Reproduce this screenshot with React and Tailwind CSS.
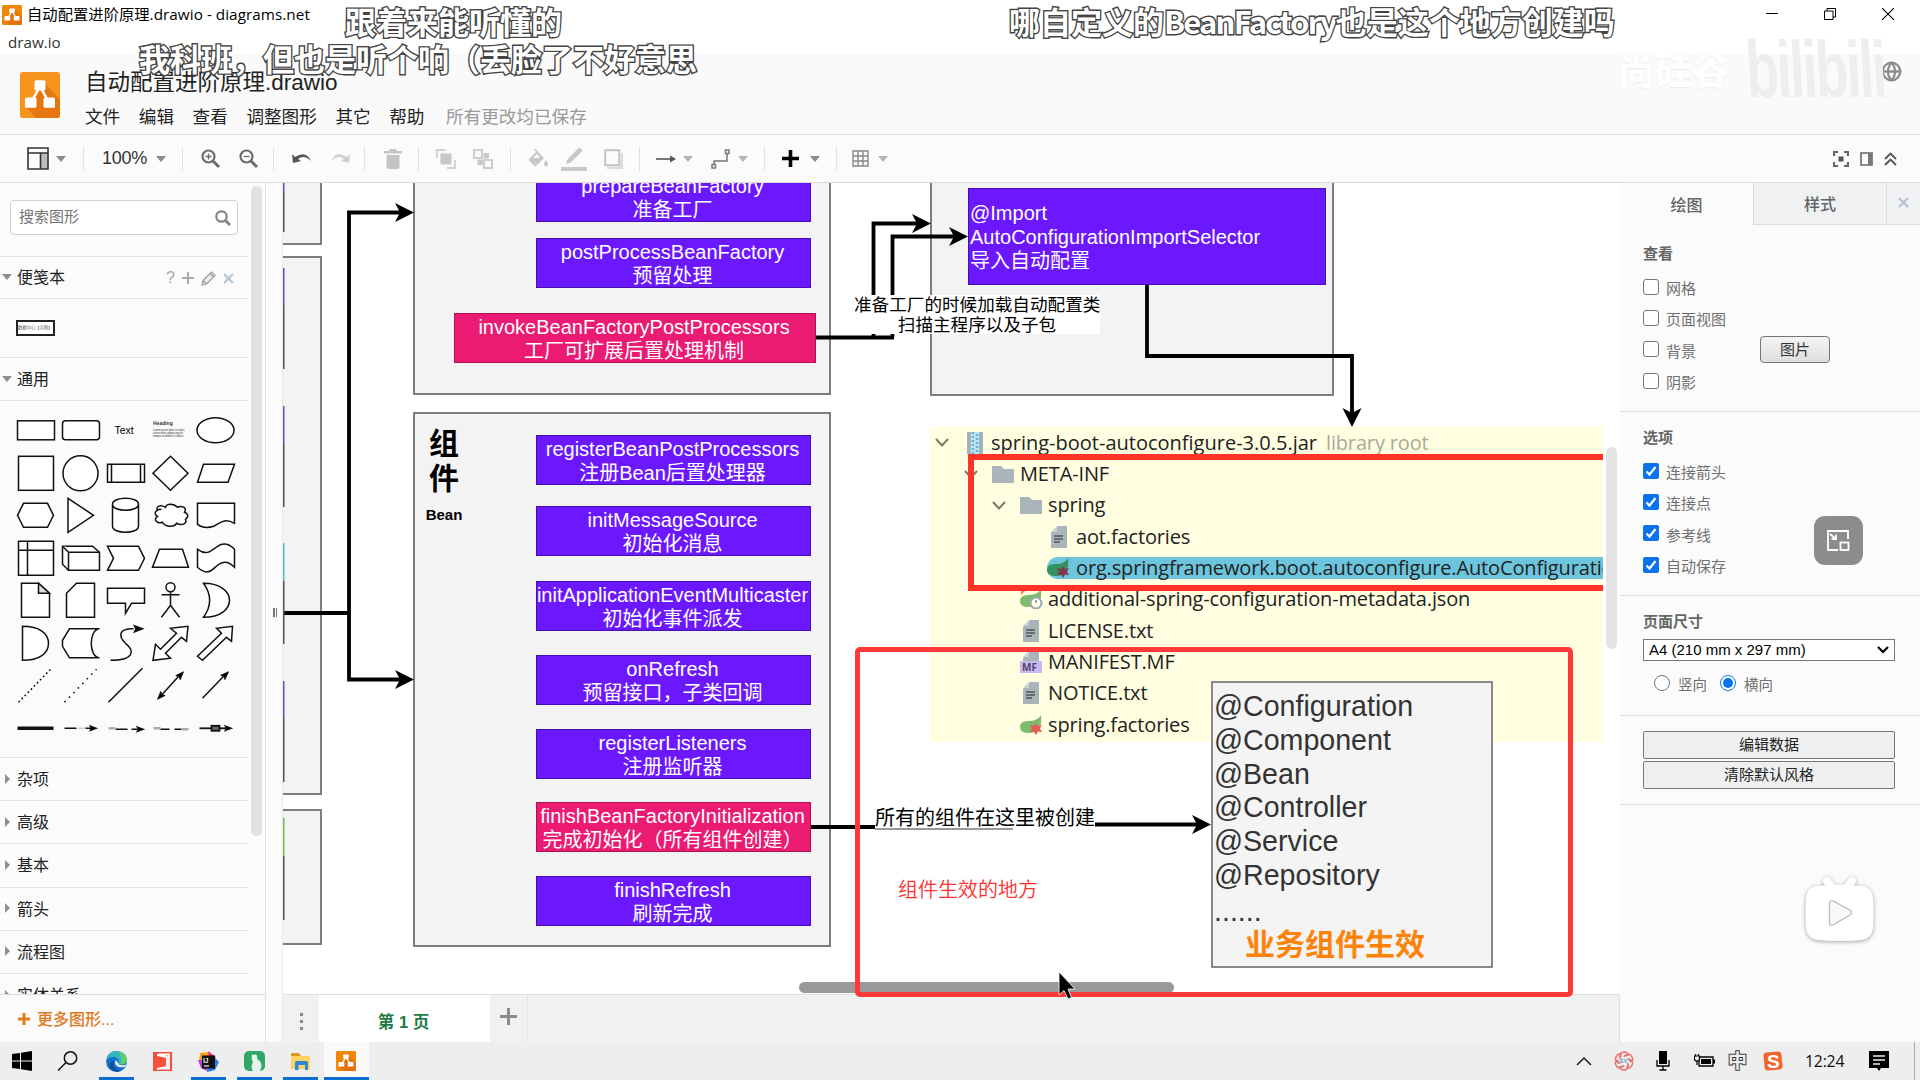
import React from 'react';
import { Globe } from 'lucide-react';

const DrawioLogo = ({ className, bg = '#f08705' }) => (
  <svg className={className} viewBox="0 0 40 45" preserveAspectRatio="none">
    <rect width="40" height="45" rx="3" fill={bg} />
    <path d="M23 9 L40 27 V42 Q40 45 37 45 H16 L6 34 L17 22 Z" fill="#df6c0c" opacity="0.75" />
    <path d="M20 14 L11 30 M20 14 L29 30" stroke="#fff" strokeWidth="2.6" />
    <rect x="14.5" y="8" width="11" height="10" rx="1.5" fill="#fff" />
    <rect x="5" y="25" width="11.5" height="10" rx="1.5" fill="#fff" />
    <rect x="23.5" y="25" width="11.5" height="10" rx="1.5" fill="#fff" />
  </svg>
);

const Caret = ({ className = 'text-[#8a8a8a]' }) => (
  <svg className={`w-[10px] h-[6px] shrink-0 ${className}`} viewBox="0 0 10 6">
    <path d="M0 0 H10 L5 6 Z" fill="currentColor" />
  </svg>
);

/* ---------- Window title ---------- */

const TitleBar = () => (
  <div className="h-[54px] bg-white flex justify-between text-black font-['Open_Sans','Noto_Sans_CJK_SC',sans-serif]">
    <div>
      <div className="flex items-center h-[28px] pl-[2px] gap-[5px] pt-px">
        <DrawioLogo className="w-[20px] h-[20px]" />
        <span className="text-[15.3px] tracking-[0.03px] whitespace-nowrap">自动配置进阶原理.drawio - diagrams.net</span>
      </div>
      <div className="pl-[8px] text-[15.2px] leading-[28px] text-[#333]">draw.io</div>
    </div>
    <div className="flex pt-[8px] pr-[26px] gap-[46px]">
      <svg className="w-[12px] h-[12px]" viewBox="0 0 12 12"><path d="M0 5.5 H12" stroke="#000" /></svg>
      <svg className="w-[12px] h-[12px]" viewBox="0 0 12 12" fill="none" stroke="#000">
        <path d="M0.5 3 H9 V11.5 H0.5 Z M3 3 V0.5 H11.5 V9 H9" />
      </svg>
      <svg className="w-[12px] h-[12px]" viewBox="0 0 12 12"><path d="M0 0 L12 12 M12 0 L0 12" stroke="#000" strokeWidth="1.1" /></svg>
    </div>
  </div>
);

const menus = ['文件', '编辑', '查看', '调整图形', '其它', '帮助'];

const Header = () => (
  <div className="h-[81px] bg-[#fafafa] border-b border-[#dcdcdc] flex">
    <DrawioLogo className="w-[40px] h-[46px] ml-[20px] mt-[18px]" bg="#f6941d" />
    <div className="ml-[25px] flex-1">
      <div className="text-[22.5px] leading-[30px] mt-[14px] text-[#222]">自动配置进阶原理.drawio</div>
      <div className="flex gap-[18.6px] text-[17.6px] leading-[26px] mt-[6px] text-[#222]">
        {menus.map((menu) => (
          <span key={menu}>{menu}</span>
        ))}
        <span className="text-[#999] ml-[3px]">所有更改均已保存</span>
      </div>
    </div>
    <Globe className="w-[21px] h-[21px] mt-[7px] mr-[18px] text-[#8c8c8c]" strokeWidth={2.6} />
  </div>
);

/* ---------- Toolbar ---------- */

const Group = ({ className, children }) => (
  <div className={`flex items-center h-[24px] border-r border-[#e2e2e2] ${className}`}>{children}</div>
);

const Magnifier = ({ plus }) => (
  <svg className="w-[19px] h-[19px] shrink-0" viewBox="0 0 19 19" fill="none" stroke="#6b6b6b">
    <circle cx="7.5" cy="7.5" r="6" strokeWidth="2.2" />
    <path d="M12 12 L18 18" strokeWidth="2.8" />
    <path d={plus ? 'M4.5 7.5 H10.5 M7.5 4.5 V10.5' : 'M4.5 7.5 H10.5'} strokeWidth="1.3" />
  </svg>
);

const Toolbar = () => (
  <div className="h-[48px] bg-[#fbfbfb] border-b border-[#dcdcdc] flex items-center">
    <Group className="w-[84px] pl-[27px] gap-[7px]">
      <svg className="w-[22px] h-[23px]" viewBox="0 0 22 23" fill="none" stroke="#333" strokeWidth="1.6">
        <rect x="14" y="6" width="7" height="16" fill="#bbb" stroke="none" />
        <path d="M1 1 H21 V22 H1 Z M1 6 H21 M13.5 6 V22" />
      </svg>
      <Caret />
    </Group>
    <Group className="w-[98.5px] pl-[18px] gap-[9px] text-[18px] text-[#333]">
      <span className="w-[45px] tracking-[-0.3px]">100%</span>
      <Caret />
    </Group>
    <Group className="w-[91px] pl-[18px] gap-[19px]">
      <Magnifier plus />
      <Magnifier />
    </Group>
    <Group className="w-[91px] pl-[18px] gap-[18px]">
      <svg className="w-[20px] h-[12px]" viewBox="0 0 20 12">
        <path d="M0 1 L1 10 L9 8 L6 6 Q12 1 19 8 Q14 -3 3 4 Z" fill="#555" />
      </svg>
      <svg className="w-[20px] h-[12px]" viewBox="0 0 20 12">
        <path d="M20 1 L19 10 L11 8 L14 6 Q8 1 1 8 Q6 -3 17 4 Z" fill="#d0d0d0" />
      </svg>
    </Group>
    <Group className="w-[54px] pl-[19px]">
      <svg className="w-[18px] h-[20px]" viewBox="0 0 18 20" fill="#c4c4c4">
        <path d="M0 2 H5 L6 0 H12 L13 2 H18 V4.5 H0 Z M2.5 6 H15.5 V18 Q15.5 20 13.5 20 H4.5 Q2.5 20 2.5 18 Z" />
      </svg>
    </Group>
    <Group className="w-[92px] pl-[17px] gap-[17px]">
      <svg className="w-[20px] h-[20px]" viewBox="0 0 20 20" fill="none" stroke="#cfcfcf" strokeWidth="1.8">
        <path d="M9 1 H1 V9 M19 11 V19 H11" />
        <rect x="4.5" y="4.5" width="11" height="11" fill="#c8c8c8" stroke="none" />
      </svg>
      <svg className="w-[20px] h-[20px]" viewBox="0 0 20 20" fill="none" stroke="#c8c8c8" strokeWidth="1.8">
        <rect x="1" y="1" width="8" height="8" />
        <rect x="11" y="11" width="8" height="8" />
        <path d="M10.5 4 H16 V9.5 H10 V16 H4.5 V10.5 H10.5 Z" fill="#c8c8c8" stroke="none" />
      </svg>
    </Group>
    <Group className="w-[129px] pl-[16px] gap-[13px]">
      <svg className="w-[21px] h-[20px]" viewBox="0 0 21 20" fill="#c8c8c8">
        <path d="M3 9 L9 3 L7 1 L8.5 0 L17 9 L9 17 Q8 17.5 7 16.5 L2 11.5 Q1 10 3 9 Z M19 11 Q21 14 21 15.5 A2 2 0 0 1 17 15.5 Q17 14 19 11 Z" />
        <path d="M6 9 L10 5 L13 8.5 Z" fill="#fbfbfb" />
      </svg>
      <svg className="w-[26px] h-[24px]" viewBox="0 0 26 24" fill="#c8c8c8">
        <path d="M5 17 L6 13 L17 1.5 Q18.5 0 20 1.5 L21 2.5 Q22 4 20.5 5 L9 16 Z" />
        <rect y="20" width="26" height="4" />
      </svg>
      <svg className="w-[19px] h-[20px] ml-[4px]" viewBox="0 0 19 20" fill="none">
        <path d="M3 19 H18 V4" stroke="#dcdcdc" strokeWidth="3" />
        <rect x="1.2" y="1.2" width="14" height="15" stroke="#c4c4c4" strokeWidth="2" fill="#fbfbfb" />
      </svg>
    </Group>
    <Group className="w-[125px] pl-[16px] gap-[7px]">
      <svg className="w-[20px] h-[8px]" viewBox="0 0 20 8">
        <path d="M0 4 H16" stroke="#555" strokeWidth="1.6" />
        <path d="M14 0.5 L20 4 L14 7.5 Z" fill="#555" />
      </svg>
      <Caret className="text-[#b5b5b5]" />
      <svg className="w-[20px] h-[20px] ml-[11px]" viewBox="0 0 20 20" fill="none" stroke="#777" strokeWidth="1.5">
        <path d="M3 16 V12 H16 V4" />
        <rect x="1" y="15.5" width="3.5" height="3.5" />
        <rect x="14.5" y="1" width="3.5" height="3.5" />
      </svg>
      <Caret className="text-[#b5b5b5]" />
    </Group>
    <Group className="w-[72px] pl-[17px] gap-[11px]">
      <svg className="w-[17px] h-[17px]" viewBox="0 0 17 17"><path d="M8.5 0 V17 M0 8.5 H17" stroke="#000" strokeWidth="3.6" /></svg>
      <Caret />
    </Group>
    <div className="flex items-center gap-[9px] pl-[15px]">
      <svg className="w-[17px] h-[17px]" viewBox="0 0 17 17" fill="none" stroke="#888" strokeWidth="1.4">
        <path d="M1 1 H16 V16 H1 Z M1 6 H16 M1 11 H16 M6 1 V16 M11 1 V16" />
      </svg>
      <Caret className="text-[#b5b5b5]" />
    </div>
    <div className="ml-auto mr-[23px] flex items-center gap-[11px]">
      <svg className="w-[16px] h-[16px]" viewBox="0 0 16 16" fill="none" stroke="#666" strokeWidth="2.2">
        <path d="M1 5 V1 H5 M11 1 H15 V5 M15 11 V15 H11 M5 15 H1 V11" />
        <rect x="5.5" y="5.5" width="5" height="5" fill="#555" stroke="none" />
      </svg>
      <svg className="w-[13px] h-[14px]" viewBox="0 0 13 14">
        <path d="M1 1 H12 V13 H1 Z" fill="none" stroke="#666" strokeWidth="1.6" />
        <rect x="8" y="1" width="4" height="12" fill="#777" />
      </svg>
      <svg className="w-[13px] h-[14px]" viewBox="0 0 13 14" fill="none" stroke="#555" strokeWidth="1.9">
        <path d="M1 7 L6.5 1.5 L12 7 M1 13 L6.5 7.5 L12 13" />
      </svg>
    </div>
  </div>
);

/* ---------- Shape sidebar ---------- */

const HEAD = 'M0 0 L-8 -3 L-6.5 0 L-8 3 Z';

const shapes = [
  <rect x="-18" y="-9.5" width="37" height="19" />,
  <rect x="-18" y="-9.5" width="37" height="19" rx="3" />,
  <text x="-11" y="4" fontSize="10.5" fill="#000" stroke="none">Text</text>,
  <g stroke="none" fill="#333">
    <text x="-17.5" y="-5" fontSize="5" fontWeight="bold">Heading</text>
    <text x="-17.5" y="1" fontSize="2.6">Lorem ipsum dolor sit amet,</text>
    <text x="-17.5" y="4" fontSize="2.6">consectetur adipisicing elit</text>
    <text x="-17.5" y="7" fontSize="2.6">tempor incididunt ut labore</text>
  </g>,
  <ellipse rx="18.5" ry="12.5" />,
  <rect x="-17" y="-17" width="35" height="34" />,
  <circle r="17.5" />,
  <path d="M-18 -9 H19 V9 H-18 Z M-14 -9 V9 M15 -9 V9" />,
  <path d="M0 -17 L17.5 0 L0 17 L-17.5 0 Z" />,
  <path d="M-12 -9 H19 L12.5 9 H-18 Z" />,
  <path d="M-12 -12 H12 L18 0 L12 12 H-12 L-18 0 Z" />,
  <path d="M-12.5 -17 L13 0 L-12.5 17 Z" />,
  <path d="M-13 -11 V11 C-13 19 13 19 13 11 V-11 C13 -19 -13 -19 -13 -11 C-13 -3 13 -3 13 -11" />,
  <path d="M-9 -6 C-14 -6 -18 -2 -13 1 C-18 4 -13 9 -8 7 C-5 12 4 12 6 8 C12 11 17 8 15 4 C19 1 17 -2 14 -3 C17 -8 11 -10 7 -8 C3 -12 -4 -12 -5 -8 C-10 -11 -15 -9 -13 -5" />,
  <path d="M-18 -12 H19 V8 C9 2 4 8 -2 11 C-8 13 -14 12 -18 9 Z" />,
  <path d="M-17 -17 H18 V17 H-17 Z M-8 -17 V17 M-17 -8 H18" />,
  <g><path d="M-18 -12 H12 L19 -6 V12 H-12 L-18 6 Z" /><path d="M-18 -12 L-12 -6 H19 M-12 -6 V12" /></g>,
  <path d="M-18 -12 H13 L19 0 L13 12 H-18 L-12 0 Z" />,
  <path d="M-11 -9 H12 L18 9 H-18 Z" />,
  <path d="M-18 -9 C-8 -2 -4 -8 2 -12 C8 -16 14 -14 19 -9 V9 C14 4 8 2 2 7 C-4 12 -8 18 -18 9 Z" />,
  <g><path d="M-14 -17 H3 L14 -7 V17 H-14 Z" /><path d="M3 -17 V-7 H14 Z" fill="#ddd" /></g>,
  <path d="M-4 -17 H14 V17 H-14 V-7 Z" />,
  <path d="M-18 -12 H19 V3 H6 L0 13 V3 H-18 Z" />,
  <g><circle cy="-13" r="4.5" /><path d="M0 -8 V5 M-9 -5.5 H9 M-9 17 L0 5 L9 17" fill="none" /></g>,
  <path d="M-12 -17 C6 -17 14 -8 14 0 C14 8 6 17 -12 17 C-4 6 -4 -6 -12 -17 Z" />,
  <path d="M-13 -17 C4 -17 13 -10 13 0 C13 10 4 17 -13 17 Z" />,
  <path d="M-11 -14.5 H19 C8 -14 8 14 19 14.5 H-11 L-18 3 V-3 Z" />,
  <g><path d="M-15 17 C8 17 10 8 0 0 C-8 -8 -6 -15 8 -14.5" fill="none" /><path d={HEAD} transform="translate(17 -14.5)" fill="#000" /></g>,
  <path d="M17.5 -17 L16 -2 L11 -6 L-5 10 L0 15 L-17.5 17 L-15 1 L-10 6 L6 -10 L0 -15 Z" />,
  <path d="M17 -17 L16 -2 L11 -6 L-13 17 L-18 13 L6 -10 L1 -15 Z" />,
  <path d="M-17 16 L16 -18" strokeDasharray="1.8 2.6" />,
  <path d="M-16 16 L16 -17" strokeDasharray="1.6 4.8" />,
  <path d="M-17 16 L17 -18" />,
  <g transform="translate(0 -1)"><path d="M-10 11 L10 -11" /><path d={HEAD} transform="translate(13 -13.5) rotate(-47)" fill="#000" strokeWidth="0.8" /><path d={HEAD} transform="translate(-13 14) rotate(133)" fill="#000" strokeWidth="0.8" /></g>,
  <g transform="translate(0 -1)"><path d="M-13 13 L10 -11" /><path d={HEAD} transform="translate(13 -13.5) rotate(-45)" fill="#000" strokeWidth="0.8" /></g>,
  <path d="M-18 0 H18" strokeWidth="3.4" />,
  <g><path d="M-16 0 H-4 M5 0 H12" strokeWidth="1.6" /><path d="M-2 0 H4" stroke="#ccc" /><path d={HEAD} transform="translate(16 0) scale(0.8)" fill="#000" /></g>,
  <g><path d="M-10 1 H2 M6 1 H12" strokeWidth="1.6" /><path d="M-17 0 H-10" stroke="#aaa" strokeWidth="2.4" /><path d={HEAD} transform="translate(18 1) scale(0.8)" fill="#000" /></g>,
  <g><path d="M-10 1 H-1 M4 1 H11" strokeWidth="1.6" /><path d="M-17 0 H-10 M11 1 H18" stroke="#aaa" strokeWidth="2.4" /></g>,
  <g><path d="M-16 0 H12" strokeWidth="1.8" /><rect x="-4" y="-2.5" width="8" height="5" fill="#666" strokeWidth="1.8" /><path d={HEAD} transform="translate(16 0) scale(0.8)" fill="#000" /></g>,
];

const Triangle = ({ open }) => (
  <svg className="w-[10px] h-[10px] shrink-0 mb-[3px]" viewBox="0 0 10 10" fill="#8f8f8f">
    <path d={open ? 'M0 2 H10 L5 8 Z' : 'M3 0 L8 5 L3 10 Z'} />
  </svg>
);

const closedSections = ['杂项', '高级', '基本', '箭头', '流程图', '实体关系'];

const Sidebar = () => (
  <div className="w-[266px] shrink-0 border-r border-[#e3e3e3] bg-[#fbfbfb] flex flex-col">
    <div className="flex-1 min-h-0 overflow-hidden flex">
      <div className="w-[248px]">
        <div className="h-[74px] border-b border-[#e3e3e3] pt-[17px] pl-[10px]">
          <div className="w-[228px] h-[35px] border border-[#d0d0d0] rounded bg-white flex items-center justify-between pl-[8px] pr-[6px] text-[15px] text-[#757575]">
            搜索图形
            <svg className="w-[16px] h-[16px]" viewBox="0 0 16 16" fill="none" stroke="#858585">
              <circle cx="6.5" cy="6.5" r="5.2" strokeWidth="2.2" />
              <path d="M10.5 10.5 L15 15" strokeWidth="3" />
            </svg>
          </div>
        </div>
        <div className="h-[42px] border-b border-[#e3e3e3] flex items-center pl-[2px] pt-px gap-[5px] text-[16px] text-[#222]">
          <Triangle open />
          <span className="flex-1">便笺本</span>
          <div className="flex items-center gap-[7px] pr-[14px] text-[#a5a5a5]">
            <span className="text-[16px] leading-none">?</span>
            <svg className="w-[12px] h-[12px]" viewBox="0 0 12 12"><path d="M6 0 V12 M0 6 H12" stroke="#aaa" strokeWidth="2" /></svg>
            <svg className="w-[15px] h-[15px]" viewBox="0 0 15 15" fill="#eee" stroke="#999" strokeWidth="1.2">
              <path d="M1 14 L2 9.5 L10.5 1 L14 4.5 L5.5 13 Z M9 2.5 L12.5 6 M2 9.5 L5.5 13" />
            </svg>
            <svg className="w-[11px] h-[11px]" viewBox="0 0 11 11"><path d="M1 1 L10 10 M10 1 L1 10" stroke="#b5c3d8" strokeWidth="2.2" /></svg>
          </div>
        </div>
        <div className="h-[59px] border-b border-[#e3e3e3] pl-[16px] pt-[21px]">
          <div className="w-[39px] h-[16px] border-2 border-[#222] bg-white text-[4.3px] leading-[12px] text-[#555] whitespace-nowrap">
            数据中心【示例】
          </div>
        </div>
        <div className="h-[43px] border-b border-[#e3e3e3] flex items-center pl-[2px] pt-[2px] gap-[5px] text-[16px] text-[#222]">
          <Triangle open />
          <span>通用</span>
        </div>
        <div className="h-[357px] border-b border-[#e3e3e3] pl-[13px] pt-[8px] grid grid-cols-[repeat(5,45px)] auto-rows-[42.6px] content-start">
          {shapes.map((shape, i) => (
            <svg key={i} className="w-[45px] h-[42.6px]" viewBox="-22.5 -21.3 45 42.6" fill="#fff" stroke="#111" strokeWidth="1.5">
              {shape}
            </svg>
          ))}
        </div>
        {closedSections.map((name) => (
          <div key={name} className="h-[43.2px] border-b border-[#e3e3e3] flex items-center pl-[2px] pt-[2px] gap-[5px] text-[16px] text-[#222]">
            <Triangle />
            <span>{name}</span>
          </div>
        ))}
      </div>
      <div className="w-[11px] h-[650px] ml-[3px] mt-[3px] rounded-full bg-[#e1e1e1]" />
    </div>
    <div className="h-[48px] border-t border-[#dcdcdc] flex items-center pl-[18px] gap-[7px] text-[16px] font-medium text-[#e07a1f]">
      <svg className="w-[12px] h-[12px]" viewBox="0 0 12 12"><path d="M6 0 V12 M0 6 H12" stroke="currentColor" strokeWidth="3" /></svg>
      <span className="pt-[2px]">更多图形...</span>
    </div>
  </div>
);

/* ---------- Diagram ---------- */

// Positions are diagram coordinates, the viewport below is panned over them
const steps = [
  { pos: 'left-[536px] top-[172px] w-[275px]', name: 'prepareBeanFactory', note: '准备工厂' },
  { pos: 'left-[536px] top-[238px] w-[275px]', name: 'postProcessBeanFactory', note: '预留处理' },
  { pos: 'left-[454px] top-[313px] w-[362px]', name: 'invokeBeanFactoryPostProcessors', note: '工厂可扩展后置处理机制', hot: true },
  { pos: 'left-[536px] top-[435px] w-[275px]', name: 'registerBeanPostProcessors', note: '注册Bean后置处理器' },
  { pos: 'left-[536px] top-[506px] w-[275px]', name: 'initMessageSource', note: '初始化消息' },
  { pos: 'left-[536px] top-[581px] w-[275px]', name: 'initApplicationEventMulticaster', note: '初始化事件派发' },
  { pos: 'left-[536px] top-[655px] w-[275px]', name: 'onRefresh', note: '预留接口，子类回调' },
  { pos: 'left-[536px] top-[729px] w-[275px]', name: 'registerListeners', note: '注册监听器' },
  { pos: 'left-[536px] top-[802px] w-[275px]', name: 'finishBeanFactoryInitialization', note: '完成初始化（所有组件创建）', hot: true },
  { pos: 'left-[536px] top-[876px] w-[275px]', name: 'finishRefresh', note: '刷新完成' },
];

const containers = [
  'left-[200px] top-[100px] w-[122px] h-[145px]',
  'left-[200px] top-[256px] w-[122px] h-[539px]',
  'left-[200px] top-[809px] w-[122px] h-[136px]',
  'left-[413px] top-[100px] w-[418px] h-[295px]',
  'left-[413px] top-[412px] w-[418px] h-[535px]',
  'left-[930px] top-[100px] w-[404px] h-[296px]',
];

const annotations = ['@Configuration', '@Component', '@Bean', '@Controller', '@Service', '@Repository'];

const Chevron = () => (
  <svg className="w-[14px] h-[9px] shrink-0" viewBox="0 0 14 9"><path d="M1 1 L7 7.5 L13 1" fill="none" stroke="#7b7b6c" strokeWidth="2" /></svg>
);

const FileIcon = ({ kind }) => {
  if (kind === 'jar') {
    return (
      <svg className="w-[16px] h-[22px]" viewBox="0 0 16 22">
        <rect width="16" height="22" fill="#a3b2bd" />
        <rect x="4" width="8" height="22" fill="#bfe6f0" />
        <path d="M6 0 V22 M10 2 V22" stroke="#5fb9d3" strokeWidth="2.5" strokeDasharray="2 2" />
      </svg>
    );
  }
  if (kind === 'folder') {
    return (
      <svg className="w-[22px] h-[17px]" viewBox="0 0 22 17"><path d="M0 0 H9 L12 3 H22 V17 H0 Z" fill="#a9b4bd" /></svg>
    );
  }
  if (kind === 'spring' || kind === 'springDark' || kind === 'json') {
    const dark = kind === 'springDark';
    return (
      <svg className="w-[23px] h-[20px]" viewBox="0 0 23 20">
        {kind === 'json' && <path d="M1 0 H7 L1 6 Z" fill="#ff7a45" />}
        <path d="M21 0 Q23 18 9 18 Q0 18 0 12 Q0 6 8 6 Q18 6 21 0 Z" fill={dark ? '#34925f' : '#7dbb6c'} />
        {kind === 'json' ? (
          <>
            <circle cx="16" cy="14" r="5.5" fill="#fffee3" stroke="#9aa7b0" strokeWidth="2" />
            <path d="M16 11 V14" stroke="#9aa7b0" strokeWidth="2" />
          </>
        ) : (
          <path d="M16 8 L18 11 L22 10 L20 13.5 L22 17 L18 16.5 L16 20 L14 16.5 L10 17 L12 13.5 L10 10 L14 11 Z" fill={dark ? '#7d3b52' : '#e45b55'} />
        )}
      </svg>
    );
  }
  return (
    <svg className="w-[22px] h-[22px]" viewBox="0 0 22 22">
      <path d="M10 0 H19 V22 H3 V7 Z" fill="#a9b4bb" />
      <path d="M3 6 L9 0 V6 Z" fill="#c9d0d4" />
      {kind === 'mf' ? (
        <>
          <rect y="10" width="22" height="12" fill="#c9b8f0" />
          <text x="2" y="20" fontSize="10" letterSpacing="0" fontWeight="bold" fill="#4e4566">MF</text>
        </>
      ) : (
        <path d="M6 10 H15 M6 13 H15 M6 16 H12" stroke="#4c555b" strokeWidth="1.6" />
      )}
    </svg>
  );
};

const treeRows = [
  { indent: 'pl-[5px]', open: true, kind: 'jar', name: 'spring-boot-autoconfigure-3.0.5.jar', hint: 'library root' },
  { indent: 'pl-[34px]', open: true, kind: 'folder', name: 'META-INF' },
  { indent: 'pl-[62px]', open: true, kind: 'folder', name: 'spring' },
  { indent: 'pl-[118px]', kind: 'txt', name: 'aot.factories' },
  { indent: 'pl-[117px]', kind: 'springDark', name: 'org.springframework.boot.autoconfigure.AutoConfiguration.imports', active: true },
  { indent: 'pl-[90px]', kind: 'json', name: 'additional-spring-configuration-metadata.json' },
  { indent: 'pl-[90px]', kind: 'txt', name: 'LICENSE.txt' },
  { indent: 'pl-[90px]', kind: 'mf', name: 'MANIFEST.MF' },
  { indent: 'pl-[90px]', kind: 'txt', name: 'NOTICE.txt' },
  { indent: 'pl-[90px]', kind: 'spring', name: 'spring.factories' },
];

const FileTree = () => (
  <div className="absolute left-[930px] top-[427px] w-[673px] h-[315px] bg-[#fffee0] overflow-hidden font-['Open_Sans','Noto_Sans_CJK_SC',sans-serif] text-[20px] text-[#222] tracking-[-0.15px]">
    {treeRows.map((row) => (
      <div key={row.name} className={`relative h-[31.35px] flex items-center whitespace-nowrap ${row.indent}`}>
        {row.active && <div className="absolute left-[117px] right-0 top-[5px] h-[22px] rounded-l-full bg-[#6cc5dd]" />}
        {row.open && <div className={row.kind === 'jar' ? 'w-[32px] shrink-0' : 'w-[28px] shrink-0'}><Chevron /></div>}
        <div className={row.kind === 'jar' ? 'relative w-[24px] shrink-0' : row.active ? 'relative w-[29px] shrink-0' : 'relative w-[28px] shrink-0'}>
          <FileIcon kind={row.kind} />
        </div>
        <span className={row.kind === 'jar' ? 'tracking-[0px]' : 'relative'}>{row.name}</span>
        {row.hint && <span className="ml-[9px] text-[#a9a99b]">{row.hint}</span>}
      </div>
    ))}
    <div className="absolute left-[38px] top-[27px] w-[700px] h-[137px] border-[6px] border-[#ff3426]" />
  </div>
);

const Connectors = () => (
  <svg className="absolute left-0 top-0 w-[1920px] h-[1080px]" viewBox="0 0 1920 1080" fill="none" stroke="#000" strokeWidth="3.8">
    <path d="M283 613 H349 M405 212.5 H349 V679.5 H405" />
    <path d="M816 337.5 H894 M873.5 337 V223.5 H920 M892.5 337 V236.5 H958" />
    <path d="M1147 285 V356 H1352 V418" />
    <path d="M811 827 H875 M1095 824.5 H1202" />
    <g fill="#000" stroke="none">
      <path d="M414 212.5 L395 203 L400 212.5 L395 222 Z" />
      <path d="M414 679.5 L395 670 L400 679.5 L395 689 Z" />
      <path d="M931 223.5 L912 214 L917 223.5 L912 233 Z" />
      <path d="M968 236.5 L949 227 L954 236.5 L949 246 Z" />
      <path d="M1352 427 L1342.5 408 L1352 413 L1361.5 408 Z" />
      <path d="M1211 824.5 L1192 815 L1197 824.5 L1192 834 Z" />
    </g>
    {/* edges of the nodes that are scrolled out on the left */}
    <g strokeWidth="2">
      <path d="M283.5 183 V192 M283.5 268 V305 M283.5 406 V443 M283.5 681 V718" stroke="#6a4fb5" />
      <path d="M283.5 192 V232 M283.5 305 V369 M283.5 443 V507 M283.5 581 V644 M283.5 718 V782 M283.5 856 V920" stroke="#555" />
      <path d="M283.5 543 V581" stroke="#5cb8cc" />
      <path d="M283.5 818 V856" stroke="#7cb84f" />
    </g>
  </svg>
);

const Diagram = () => (
  <div className="relative w-[1337px] h-[811px] overflow-hidden bg-white">
    <div className="absolute left-[-283px] top-[-183px] w-[1920px] h-[1080px]">
      {containers.map((pos) => (
        <div key={pos} className={`absolute border-2 border-[#7d7d7d] bg-[#f3f3f3] ${pos}`} />
      ))}
      <Connectors />

      {steps.map((step) => (
        <div
          key={step.name}
          className={`absolute h-[50px] border flex flex-col items-center pt-px pr-[2px] text-white text-[20px] leading-[24px] whitespace-nowrap ${step.pos} ${
            step.hot ? 'bg-[#eb1a73] border-[#b0144f]' : 'bg-[#6c18ff] border-[#4410b5]'
          }`}
        >
          <span>{step.name}</span>
          <span>{step.note}</span>
        </div>
      ))}

      <div className="absolute left-[414px] top-[426px] w-[60px] text-center font-bold text-black text-[30px] leading-[35px]">
        组<br />件
        <div className="text-[15px] leading-[30px] mt-[4px]">Bean</div>
      </div>

      <div className="absolute left-[968px] top-[188px] w-[358px] h-[97px] bg-[#6c18ff] border border-[#4410b5] text-white text-[20px] leading-[24px] pt-[12px] pl-px">
        @Import
        <br />
        AutoConfigurationImportSelector
        <br />
        导入自动配置
      </div>

      <div className="absolute left-[854px] top-[295px] w-[246px] h-[39px] bg-white text-center text-black text-[17.6px] leading-[20px] whitespace-nowrap">
        准备工厂的时候加载自动配置类
        <br />
        扫描主程序以及子包
      </div>

      <FileTree />

      <div className="absolute left-[875px] top-[804px] w-[220px] h-[24px] bg-white text-black text-[20px] leading-[28px] whitespace-nowrap">
        所有的组件在这里被创建
      </div>
      <div className="absolute left-[875px] top-[828px] w-[138px] h-[1.5px] bg-[#999]" />

      <div className="absolute left-[1211px] top-[681px] w-[282px] h-[287px] border-2 border-[#888] bg-[#f4f4f4] pl-[1px] pt-[7px] text-[28.6px] leading-[33.8px] text-[#333]">
        {annotations.map((name) => (
          <div key={name}>{name}</div>
        ))}
        <div className="mt-[2px]">......</div>
        <div className="pl-[31px] text-[30px] font-bold text-[#ff8208] whitespace-nowrap mt-[-1px]">业务组件生效</div>
      </div>
    </div>

    <div className="absolute left-[516px] top-[799px] w-[375px] h-[11px] rounded-full bg-[#999]" />
    <div className="absolute left-[1323px] top-[264px] w-[11px] h-[202px] rounded-full bg-[#e4e4e4]" />
  </div>
);

const PageTabs = () => (
  <div className="h-[48px] border-t border-[#dcdfe2] bg-[#eff1f3] flex">
    <div className="w-[36px] flex flex-col items-center justify-center gap-[4px] pt-[5px]">
      <span className="w-[3px] h-[3px] bg-[#888]" />
      <span className="w-[3px] h-[3px] bg-[#888]" />
      <span className="w-[3px] h-[3px] bg-[#888]" />
    </div>
    <div className="w-[171px] bg-white flex items-center justify-center pt-[8px] pr-[2px] text-[16.5px] font-bold text-[#227a45]">第 1 页</div>
    <div className="w-[38px] border-r border-[#e2e5e8] flex justify-center pt-[13px]">
      <svg className="w-[17px] h-[17px]" viewBox="0 0 17 17"><path d="M8.5 0 V17 M0 8.5 H17" stroke="#8c8c8c" strokeWidth="3" /></svg>
    </div>
  </div>
);

/* ---------- Format panel ---------- */

const Check = ({ label, on }) => (
  <div className="h-[31.3px] flex items-center gap-[7px]">
    {on ? (
      <svg className="w-[16px] h-[16px]" viewBox="0 0 16 16">
        <rect width="16" height="16" rx="2" fill="#0b72ef" />
        <path d="M3.5 8.5 L6.5 11.5 L12.5 4" fill="none" stroke="#fff" strokeWidth="2.2" />
      </svg>
    ) : (
      <span className="w-[16px] h-[16px] border border-[#767676] rounded-[3px] bg-white" />
    )}
    <span className="text-[15px] leading-[18px] pt-[5px] text-[#707070]">{label}</span>
  </div>
);

const FormatPanel = () => (
  <div className="w-[301px] shrink-0 border-l border-[#dcdcdc] bg-[#fbfbfb] text-[#666]">
    <div className="flex h-[42px] text-[16px] font-medium">
      <div className="w-[133px] flex items-center justify-center pt-[3px]">绘图</div>
      <div className="w-[133px] flex items-center justify-center bg-[#eff1f3] border-l border-b border-[#dcdcdc] pt-[2px]">样式</div>
      <div className="flex-1 flex items-center justify-center bg-[#eff1f3] border-l border-b border-[#dcdcdc]">
        <svg className="w-[11px] h-[11px] mt-[-3px]" viewBox="0 0 11 11"><path d="M1 1 L10 10 M10 1 L1 10" stroke="#b5c0cf" strokeWidth="2.2" /></svg>
      </div>
    </div>

    <div className="h-[187px] border-b border-[#dcdcdc] pl-[23px] pt-[18px]">
      <div className="text-[15px] leading-[22px] font-bold">查看</div>
      <div className="flex mt-[6px]">
        <div className="w-[117px]">
          {['网格', '页面视图', '背景', '阴影'].map((label) => (
            <Check key={label} label={label} />
          ))}
        </div>
        <button className="w-[70px] h-[27px] mt-[65px] border border-[#777] rounded bg-gradient-to-b from-[#f4f4f4] to-[#dfdfdf] text-[15px] leading-[22px] text-[#333]">图片</button>
      </div>
    </div>

    <div className="h-[184px] border-b border-[#dcdcdc] pl-[23px] pt-[15px]">
      <div className="text-[15px] leading-[22px] font-bold mb-[6px]">选项</div>
      {['连接箭头', '连接点', '参考线', '自动保存'].map((label) => (
        <Check key={label} label={label} on />
      ))}
    </div>

    <div className="h-[120px] border-b border-[#dcdcdc] pl-[23px] pt-[15px]">
      <div className="text-[15px] leading-[22px] font-bold">页面尺寸</div>
      <div className="w-[252px] h-[22px] mt-[6px] border border-[#767676] bg-white flex items-center justify-between pl-[5px] pr-[5px] text-[15px] text-black">
        A4 (210 mm x 297 mm)
        <svg className="w-[12px] h-[8px]" viewBox="0 0 12 8"><path d="M1 1 L6 6 L11 1" fill="none" stroke="#000" strokeWidth="2.2" /></svg>
      </div>
      <div className="flex items-center pl-[11px] mt-[11px] text-[14.5px] leading-[18px] text-[#707070]">
        <span className="w-[16px] h-[16px] border border-[#767676] rounded-full bg-white" />
        <span className="ml-[8px] w-[42px] pt-[4px]">竖向</span>
        <span className="w-[16px] h-[16px] border-[1.5px] border-[#0b72ef] rounded-full bg-white flex items-center justify-center">
          <span className="w-[10px] h-[10px] rounded-full bg-[#0b72ef]" />
        </span>
        <span className="ml-[8px] pt-[4px]">横向</span>
      </div>
    </div>

    <div className="h-[89px] border-b border-[#dcdcdc] pl-[23px] pt-[15px] flex flex-col gap-[2px] text-[15px] text-[#222]">
      <button className="w-[252px] h-[28px] border border-[#777] rounded-[2px] bg-[#efefef]">编辑数据</button>
      <button className="w-[252px] h-[28px] border border-[#777] rounded-[2px] bg-[#efefef]">清除默认风格</button>
    </div>
  </div>
);

/* ---------- Taskbar ---------- */

const Task = ({ className, running = true, children }) => (
  <div className={`h-full flex items-center justify-center border-b-[3px] ${running ? 'border-[#0a6fd0]' : 'border-transparent'} ${className}`}>
    <div className="pt-[3px]">{children}</div>
  </div>
);

const Taskbar = () => (
  <div className="h-[38px] bg-[#eeeeee] flex">
    <Task running={false} className="w-[20px] ml-[12px]">
      <svg className="w-[20px] h-[20px]" viewBox="0 0 20 20"><path d="M0 3 L8 2 V9.5 H0 Z M9 1.8 L20 0 V9.5 H9 Z M0 10.5 H8 V18 L0 17 Z M9 10.5 H20 V20 L9 18.2 Z" fill="#000" /></svg>
    </Task>
    <Task running={false} className="w-[21px] ml-[25px]">
      <svg className="w-[21px] h-[20px]" viewBox="0 0 21 20" fill="none" stroke="#111" strokeWidth="1.5">
        <circle cx="13.5" cy="7" r="6.2" />
        <path d="M9 11.5 L1 19.5" />
      </svg>
    </Task>
    <Task className="w-[35px] ml-[21px]">
      <svg className="w-[21px] h-[21px]" viewBox="0 0 21 21">
        <circle cx="10.5" cy="10.5" r="10.5" fill="#1273c8" />
        <path d="M0.5 9 Q2 0 11 0 Q20.5 1 21 9 Q20 14 14 13.5 Q11.5 13 12.5 11 Q14 8 9 6 Q4 5 0.5 9 Z" fill="#36b6c0" />
        <path d="M12 0 Q21 2 21 9 Q20 14 14 13.5 Q18 7 12 0 Z" fill="#5ccf6a" />
        <path d="M8 9 Q5 18 15 20 Q9 22 5 18 Q1 12 8 9 Z" fill="#0c4f9e" />
        <path d="M10 9 Q7 14 13 16 Q17 17 20 15 Q21 13 18 14 Q13 15 12 12 Z" fill="#eeeeee" />
      </svg>
    </Task>
    <Task running={false} className="w-[20px] ml-[19px]">
      <svg className="w-[20px] h-[21px]" viewBox="0 0 20 21">
        <path d="M0 1 H19 V20 H0 Z" fill="#f4503c" />
        <path d="M4 4 L14 6 V16 L4 18 M5 3.5 H16 V17.5 H5" fill="none" stroke="#fff" strokeWidth="1.8" />
        <path d="M0 1 H4 V20 H0 Z" fill="#f4503c" />
      </svg>
    </Task>
    <Task className="w-[35px] ml-[18px]">
      <svg className="w-[21px] h-[21px]" viewBox="0 0 21 21">
        <path d="M2 2 L10 1 L11 10 L1 12 Z" fill="#f9a11b" />
        <path d="M10 0 L18 6 L11 12 Z" fill="#e0317f" />
        <path d="M14 4 L21 11 L17 19 L9 21 L10 8 Z" fill="#2b7de9" />
        <path d="M0 9 L9 9 L9 20 L3 17 Z" fill="#b83fd0" />
        <rect x="4" y="4.5" width="13" height="13" fill="#111" />
        <text x="5" y="11.5" fontSize="6.5" fontWeight="bold" fill="#fff">IJ</text>
        <path d="M6 15 H11" stroke="#fff" strokeWidth="1.2" />
      </svg>
    </Task>
    <Task className="w-[35px] ml-[11px] pr-px">
      <svg className="w-[21px] h-[20px]" viewBox="0 0 21 20">
        <rect width="21" height="20" rx="5" fill="#2fa866" />
        <path d="M8 3 Q10 5 12 3 Q14 6 13 8 Q14 9 16 10 Q19 14 16 20 H9 Q6 16 9 11 Q7 8 8 3 Z" fill="#e6f5ec" />
      </svg>
    </Task>
    <Task className="w-[35px] ml-[11px]">
      <svg className="w-[20px] h-[17px]" viewBox="0 0 20 17">
        <path d="M0 0 H8 L10 3 H0 Z" fill="#dd9b1d" />
        <path d="M0 3 H19 V16 H0 Z" fill="#fbd465" />
        <path d="M4 17 V10 Q4 8 6 8 H15 Q17 8 17 10 V17 H14 V12 H7.5 V17 Z" fill="#2f87d6" />
      </svg>
    </Task>
    <Task className="w-[45px] ml-[6px] pr-[2px] bg-[#f9f9f9]">
      <DrawioLogo className="w-[20px] h-[20px]" />
    </Task>

    <div className="ml-auto flex items-center">
      <svg className="w-[16px] h-[9px]" viewBox="0 0 16 9"><path d="M1 8 L8 1 L15 8" fill="none" stroke="#222" strokeWidth="1.5" /></svg>
      <svg className="w-[20px] h-[20px] ml-[22px]" viewBox="-10 -10 20 20" fill="none" stroke="#ea7070" strokeWidth="1.5">
        {[0, 60, 120, 180, 240, 300].map((deg) => (
          <path key={deg} d="M-3 -4 Q-5 -9 0 -9 Q4 -9 4 -6 Q1 -7 0 -4" transform={`rotate(${deg})`} />
        ))}
        <text x="-4" y="2" fontSize="5.5" fontWeight="bold" fill="#5a9ad6" stroke="none">EV</text>
      </svg>
      <svg className="w-[14px] h-[20px] ml-[22px]" viewBox="0 0 14 20">
        <rect x="3" width="8" height="13" fill="#000" />
        <path d="M1 9 V15 H13 V9 M7 15 V19 M3.5 19 H10.5" fill="none" stroke="#000" strokeWidth="1.3" />
      </svg>
      <svg className="w-[21px] h-[14px] ml-[24px]" viewBox="0 0 21 14">
        <path d="M5 3 H19 V12 H5 Z" fill="none" stroke="#000" strokeWidth="1.3" />
        <path d="M7 5 H17 V10 H7 Z M19 5.5 H21 V9.5 H19 Z" fill="#000" />
        <path d="M0.5 2 H5.5 V5 Q5.5 7 3 7 Q0.5 7 0.5 5 Z M1.5 0 V2 M4.5 0 V2 M3 7 V11" fill="#eee" stroke="#000" strokeWidth="1.2" />
      </svg>
      <span className="ml-[13px] mr-[2px] text-[19px] leading-none font-bold text-[#eee] [-webkit-text-stroke:2px_#333] [paint-order:stroke_fill]">中</span>
      <svg className="w-[20px] h-[20px] ml-[14px]" viewBox="0 0 20 20">
        <rect x="1" y="1" width="18" height="18" rx="3.5" fill="#f4652a" transform="rotate(-6 10 10)" />
        <text x="4" y="17" fontSize="19" fontWeight="bold" fill="#fff">S</text>
      </svg>
      <span className="ml-[22px] w-[41px] font-['Open_Sans',sans-serif] text-[15.8px] tracking-[-0.2px] pt-px text-[#111]">12:24</span>
      <svg className="w-[20px] h-[20px] ml-[23px]" viewBox="0 0 20 20">
        <path d="M0 0 H20 V17 H12 L10 20 L8 17 H0 Z" fill="#000" />
        <path d="M4 5 H16 M4 9 H16 M4 13 H11" stroke="#eee" strokeWidth="1.3" />
      </svg>
      <div className="w-px h-[38px] bg-[#aaa] ml-[25px] mr-[5px]" />
    </div>
  </div>
);

/* ---------- Player overlay ---------- */

const danmaku = [
  { pos: 'left-[345px] top-[2px]', text: '跟着来能听懂的' },
  { pos: 'left-[139px] top-[39px]', text: '我科班，但也是听个响（丢脸了不好意思' },
  { pos: 'left-[1009px] top-[2px]', text: <>哪自定义的<span className="tracking-[-1.8px]">BeanFactory</span>也是这个地方创建吗</> },
];

const Overlay = () => (
  <>
    {danmaku.map((item) => (
      <div
        key={item.pos}
        className={`absolute whitespace-nowrap font-['Noto_Sans_CJK_SC',sans-serif] text-[31px] leading-[38px] font-bold text-white [-webkit-text-stroke:2.8px_#444] [paint-order:stroke_fill] ${item.pos}`}
      >
        {item.text}
      </div>
    ))}

    <div className="absolute left-[1618px] top-[51px] text-[37px] leading-[44px] font-bold text-white [text-shadow:0_1px_1px_#ececec]">尚硅谷</div>
    <div className="absolute left-[1746px] top-[30px] text-[80px] leading-[80px] font-bold tracking-[-3px] text-[#eeeeee] origin-left scale-x-[0.67] skew-x-[5deg]">bilibili</div>

    <div className="absolute left-[855px] top-[647px] w-[718px] h-[350px] border-[5px] border-[#ff3838] rounded-[5px]" />
    <div className="absolute left-[898px] top-[876px] text-[20px] leading-[28px] font-[350] text-[#ff3030]">组件生效的地方</div>
    <svg className="absolute left-[1058px] top-[971px] w-[18px] h-[29px]" viewBox="0 0 18 29">
      <path d="M1 1 V24 L6 19.5 L10 28 L13.5 26.5 L10 18 H17 Z" fill="#000" stroke="#fff" strokeWidth="0.8" />
    </svg>

    <div className="absolute left-[1814px] top-[516px] w-[49px] h-[49px] rounded-[11px] bg-[#8c8c8c] flex items-center justify-center">
      <svg className="w-[23px] h-[21px]" viewBox="0 0 23 21" fill="none" stroke="#fff" strokeWidth="1.8">
        <path d="M11 20 H1 V1 H21 V9 M3 4 L9 9 M9 4.5 V9 H4.5" />
        <rect x="13.5" y="12.5" width="8" height="7.5" />
      </svg>
    </div>
    <svg className="absolute left-[1801px] top-[871px] w-[77px] h-[77px] drop-shadow-[0_1px_2px_rgba(0,0,0,0.35)]" viewBox="0 0 77 77">
      <path d="M26 10 L32 18 M51 10 L45 18" stroke="#fff" strokeWidth="8" strokeLinecap="round" />
      <path d="M16 15 Q39 12 61 15 Q71 16 72 27 Q73 42 72 57 Q71 67 61 69 Q39 71 16 69 Q6 67 5 57 Q4 42 5 27 Q6 16 16 15 Z" fill="#fff" />
      <path d="M28.5 32 Q28.5 29 32 30 L49 39 Q52 41.5 49 44 L32 54 Q28.5 55 28.5 52 Z" fill="#f9f9f9" stroke="#b8b8b8" strokeWidth="1.2" />
    </svg>
  </>
);

const App = () => (
  <div className="relative w-[1920px] h-[1080px] overflow-hidden bg-white flex flex-col font-['Liberation_Sans','Noto_Sans_CJK_SC',sans-serif]">
    <TitleBar />
    <Header />
    <Toolbar />
    <div className="flex-1 min-h-0 flex">
      <Sidebar />
      <div className="w-[17px] shrink-0 bg-[#fbfbfb] border-r border-[#e8e8e8] flex items-center justify-center gap-[1px] pl-[2px]">
        <span className="w-[1.5px] h-[9px] bg-[#777]" />
        <span className="w-[1.5px] h-[9px] bg-[#777]" />
      </div>
      <div className="flex-1 min-w-0">
        <Diagram />
        <PageTabs />
      </div>
      <FormatPanel />
    </div>
    <Taskbar />
    <Overlay />
  </div>
);

export default App;
